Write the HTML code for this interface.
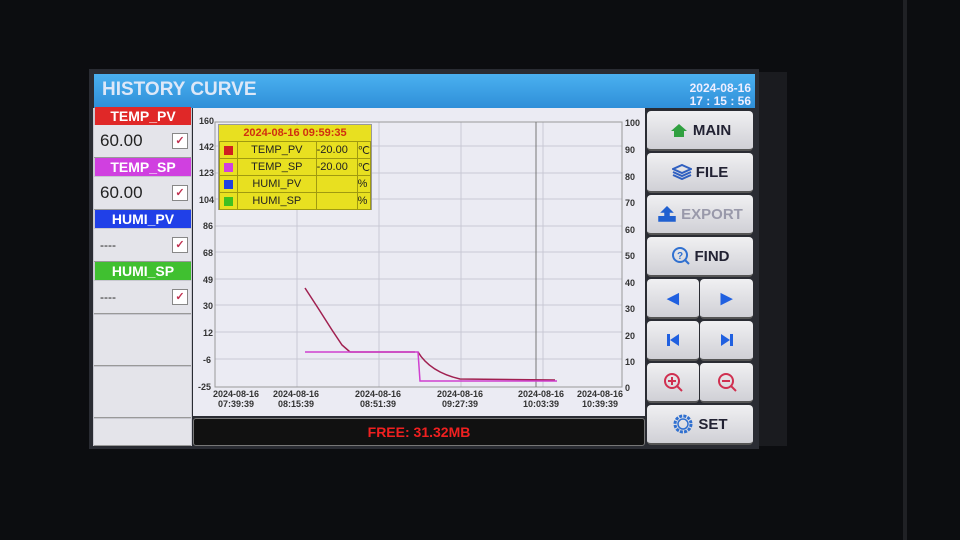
<!DOCTYPE html><html><head><style>
body{margin:0;width:960px;height:540px;background:#0c0d10;position:relative;overflow:hidden;font-family:"Liberation Sans",sans-serif;font-weight:bold}
.a{position:absolute}
.lab{position:absolute;left:95px;width:96px;height:18px;color:#fff;font-size:14px;text-align:center;line-height:18px}
.box{position:absolute;left:94px;width:97px;height:32px;background:#e4e4ea;border-bottom:1px solid #999}
.box span{position:absolute;left:6px;top:6px;font-size:17px;color:#222;font-weight:normal}
.cb{position:absolute;left:78px;top:8px;width:14px;height:14px;border:1px solid #888;background:#fff;color:#c03050;font-size:11px;line-height:14px;text-align:center}
.btn{position:absolute;left:647px;width:106px;height:40px;background:linear-gradient(#f0f0f2,#d0d0d6);border-radius:4px;border-bottom:2px solid #555;font-size:15px;color:#223;display:flex;align-items:center;justify-content:center;gap:4px;box-sizing:border-box}
.h{width:52px;left:647px}.h2{left:700px;width:53px}
.yl{position:absolute;font-size:9px;color:#333}
.xl{position:absolute;font-size:9px;color:#333;text-align:center;width:60px;line-height:10px}
td{border:1px solid #a09a10;padding:0}
</style></head><body>
<div class="a" style="left:757px;top:72px;width:30px;height:374px;background:#1a1b1f"></div>
<div class="a" style="left:903px;top:0;width:4px;height:540px;background:#202125"></div>
<div class="a" style="left:89px;top:69px;width:670px;height:380px;background:#2a2c33"></div>
<div class="a" style="left:94px;top:74px;width:661px;height:34px;background:linear-gradient(#4ab0f0,#2f8fd8)"></div>
<div class="a" style="left:102px;top:79px;font-size:19px;color:#dde8f8">HISTORY CURVE</div>
<div class="a" style="left:676px;top:82px;font-size:12px;color:#eef;text-align:right;line-height:13px;width:75px">2024-08-16<br>17 : 15 : 56</div>
<div class="a" style="left:93px;top:108px;width:99px;height:338px;background:#c8c8d0"></div>
<div class="lab" style="top:107px;background:#e02828">TEMP_PV</div>
<div class="box" style="top:125px"><span>60.00</span><div class="cb">✓</div></div>
<div class="lab" style="top:158px;background:#d040e0">TEMP_SP</div>
<div class="box" style="top:177px"><span>60.00</span><div class="cb">✓</div></div>
<div class="lab" style="top:210px;background:#2040e8">HUMI_PV</div>
<div class="box" style="top:229px"><span style="font-size:12px;top:9px">----</span><div class="cb">✓</div></div>
<div class="lab" style="top:262px;background:#40c030">HUMI_SP</div>
<div class="box" style="top:281px"><span style="font-size:12px;top:9px">----</span><div class="cb">✓</div></div>
<div class="box" style="top:315px;height:50px"></div>
<div class="box" style="top:367px;height:50px"></div>
<div class="box" style="top:419px;height:26px"></div>
<div class="a" style="left:193px;top:108px;width:452px;height:308px;background:#ebebf3"></div>
<svg class="a" style="left:0;top:0" width="960" height="540">
<g stroke="#c8c8d4" stroke-width="1">
<line x1="215" y1="146" x2="622" y2="146"/><line x1="215" y1="173" x2="622" y2="173"/><line x1="215" y1="199" x2="622" y2="199"/><line x1="215" y1="226" x2="622" y2="226"/><line x1="215" y1="252" x2="622" y2="252"/><line x1="215" y1="279" x2="622" y2="279"/><line x1="215" y1="305" x2="622" y2="305"/><line x1="215" y1="332" x2="622" y2="332"/><line x1="215" y1="359" x2="622" y2="359"/>
<line x1="297" y1="122" x2="297" y2="387"/><line x1="379" y1="122" x2="379" y2="387"/><line x1="461" y1="122" x2="461" y2="387"/><line x1="543" y1="122" x2="543" y2="387"/></g>
<rect x="215" y="122" width="407" height="265" fill="none" stroke="#999"/>
<line x1="536" y1="122" x2="536" y2="387" stroke="#777"/>
<path d="M305 288 L318 308 L332 330 L342 345 L350 352 L415 352" fill="none" stroke="#a02050" stroke-width="1.5"/>
<path d="M418 352 Q430 372 460 379 L555 380" fill="none" stroke="#a02050" stroke-width="1.5"/>
<path d="M305 352 L418 352 L420 381 L557 381" fill="none" stroke="#d040d0" stroke-width="1.5"/>
</svg>
<div class="yl" style="left:199px;top:116px">160</div><div class="yl" style="left:199px;top:142px">142</div><div class="yl" style="left:199px;top:168px">123</div><div class="yl" style="left:199px;top:195px">104</div><div class="yl" style="left:203px;top:221px">86</div><div class="yl" style="left:203px;top:248px">68</div><div class="yl" style="left:203px;top:275px">49</div><div class="yl" style="left:203px;top:301px">30</div><div class="yl" style="left:203px;top:328px">12</div><div class="yl" style="left:203px;top:355px">-6</div><div class="yl" style="left:198px;top:382px">-25</div>
<div class="yl" style="left:625px;top:118px">100</div><div class="yl" style="left:625px;top:145px">90</div><div class="yl" style="left:625px;top:172px">80</div><div class="yl" style="left:625px;top:198px">70</div><div class="yl" style="left:625px;top:225px">60</div><div class="yl" style="left:625px;top:251px">50</div><div class="yl" style="left:625px;top:278px">40</div><div class="yl" style="left:625px;top:304px">30</div><div class="yl" style="left:625px;top:331px">20</div><div class="yl" style="left:625px;top:357px">10</div><div class="yl" style="left:625px;top:383px">0</div>
<div class="xl" style="left:206px;top:389px">2024-08-16<br>07:39:39</div><div class="xl" style="left:266px;top:389px">2024-08-16<br>08:15:39</div><div class="xl" style="left:348px;top:389px">2024-08-16<br>08:51:39</div><div class="xl" style="left:430px;top:389px">2024-08-16<br>09:27:39</div><div class="xl" style="left:511px;top:389px">2024-08-16<br>10:03:39</div><div class="xl" style="left:570px;top:389px">2024-08-16<br>10:39:39</div>
<div class="a" style="left:218px;top:124px;width:152px;height:84px;background:#e8e020;border:1px solid #999;font-size:11px;color:#222">
<div style="height:16px;text-align:center;color:#d03010;line-height:16px">2024-08-16 09:59:35</div>
<table style="border-collapse:collapse;font-size:11px;width:152px;font-weight:normal">
<tr style="height:17px"><td style="width:17px"><div style="width:9px;height:9px;background:#d02020;margin:auto"></div></td><td style="text-align:center">TEMP_PV</td><td style="width:40px">-20.00</td><td style="width:12px">℃</td></tr>
<tr style="height:17px"><td><div style="width:9px;height:9px;background:#d040e0;margin:auto"></div></td><td style="text-align:center">TEMP_SP</td><td>-20.00</td><td>℃</td></tr>
<tr style="height:17px"><td><div style="width:9px;height:9px;background:#2040e0;margin:auto"></div></td><td style="text-align:center">HUMI_PV</td><td></td><td>%</td></tr>
<tr style="height:17px"><td><div style="width:9px;height:9px;background:#40c020;margin:auto"></div></td><td style="text-align:center">HUMI_SP</td><td></td><td>%</td></tr></table></div>
<div class="a" style="left:193px;top:418px;width:450px;height:26px;background:#111;border:1px solid #777;border-radius:3px;color:#f02020;font-size:14px;text-align:center;line-height:26px">FREE: 31.32MB</div>
<div class="btn" style="top:111px"><svg width="20" height="16"><path d="M2 9 L10 2 L18 9 L15 9 L15 15 L5 15 L5 9Z" fill="#30a040"/></svg>MAIN</div>
<div class="btn" style="top:153px"><svg width="20" height="16"><path d="M10 1 L19 5 L10 9 L1 5Z M1 8 L10 12 L19 8 M1 11 L10 15 L19 11" fill="none" stroke="#3060c0" stroke-width="2"/></svg>FILE</div>
<div class="btn" style="top:195px;color:#99a"><svg width="20" height="18"><path d="M10 2 L5 7 H8 V12 H12 V7 H15Z M2 11 V16 H18 V11" fill="#2060d0" stroke="#2060d0" stroke-width="1.5"/></svg>EXPORT</div>
<div class="btn" style="top:237px"><svg width="20" height="20"><circle cx="9" cy="9" r="7" fill="none" stroke="#3070d0" stroke-width="2"/><text x="6" y="13" font-size="10" fill="#3070d0" font-family="Liberation Sans">?</text><path d="M14 14 L18 18" stroke="#3070d0" stroke-width="2"/></svg>FIND</div>
<div class="btn h" style="top:279px;color:#2060e0">◀</div><div class="btn h2" style="top:279px;color:#2060e0">▶</div>
<div class="btn h" style="top:321px"><svg width="14" height="14"><rect x="1" y="1" width="3" height="12" fill="#2060e0"/><path d="M13 1 L4 7 L13 13Z" fill="#2060e0"/></svg></div><div class="btn h2" style="top:321px"><svg width="14" height="14"><rect x="10" y="1" width="3" height="12" fill="#2060e0"/><path d="M1 1 L10 7 L1 13Z" fill="#2060e0"/></svg></div>
<div class="btn h" style="top:363px"><svg width="22" height="22"><circle cx="10" cy="10" r="7" fill="none" stroke="#d03050" stroke-width="2"/><path d="M15 15 L20 20 M6 10 H14 M10 6 V14" stroke="#d03050" stroke-width="2"/></svg></div><div class="btn h2" style="top:363px"><svg width="22" height="22"><circle cx="10" cy="10" r="7" fill="none" stroke="#d03050" stroke-width="2"/><path d="M15 15 L20 20 M6 10 H14" stroke="#d03050" stroke-width="2"/></svg></div>
<div class="btn" style="top:405px;height:40px"><svg width="22" height="22"><circle cx="11" cy="11" r="8" fill="none" stroke="#3070d0" stroke-width="3" stroke-dasharray="3 1.2"/><circle cx="11" cy="11" r="5" fill="none" stroke="#3070d0" stroke-width="1.5"/></svg>SET</div>
</body></html>
